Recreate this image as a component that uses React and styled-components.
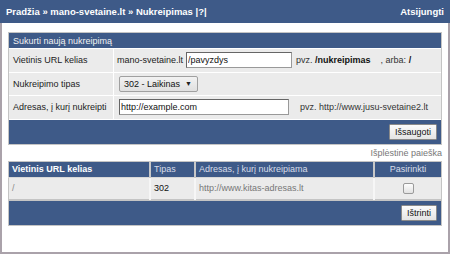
import React from "react"
import styled, { createGlobalStyle } from "styled-components"

const GlobalStyle = createGlobalStyle`
  html, body {
    margin: 0;
    padding: 0;
    background: #ffffff;
  }
  body {
    font-family: "Liberation Sans", Arial, sans-serif;
    font-size: 9px;
    color: #222;
  }
`

const blue = "#3e5a88"

const Page = styled.div`
  width: 450px;
  height: 254px;
  display: flex;
  flex-direction: column;
  box-sizing: border-box;
`

const TopBar = styled.div`
  height: 23px;
  flex: none;
  background: ${blue};
  color: #fff;
  font-weight: bold;
  font-size: 9.5px;
  display: flex;
  align-items: center;
  justify-content: space-between;
  padding: 0 6px;
`

const Main = styled.div`
  flex: 1;
  border: 2px solid #aaa2aa;
  border-top: none;
  padding: 9px 6px 0 6px;
  display: flex;
  flex-direction: column;
`

const Section = styled.div`
  border: 1px solid #c4c4c4;
  display: flex;
  flex-direction: column;
`

const SectionTitle = styled.div`
  height: 15px;
  background: ${blue};
  color: #f2f2f2;
  display: flex;
  align-items: center;
  padding: 0 4px;
`

const FormRow = styled.div`
  display: grid;
  grid-template-columns: 104px 1fr;
  column-gap: 1px;
  margin-top: 1px;
  height: 22.5px;
`

const LabelCell = styled.div`
  background: #ebebeb;
  display: flex;
  align-items: center;
  padding: 0 4px;
`

const ValueCell = styled.div`
  background: #ebebeb;
  display: flex;
  align-items: center;
  padding: 0 ${(p) => p.$pad || 3}px;
  gap: 3px;
`

const TextInput = styled.input`
  box-sizing: border-box;
  height: 16px;
  width: ${(p) => p.$w}px;
  border: 1px solid #999;
  border-top-color: #666;
  border-left-color: #666;
  background: #fff;
  font-family: "Liberation Sans", Arial, sans-serif;
  font-size: 9px;
  padding: 0 1px;
  margin-right: ${(p) => p.$mr || 0}px;
  color: #111;
  outline: none;
`

const SelectBox = styled.div`
  box-sizing: border-box;
  width: 79px;
  height: 16px;
  border: 1px solid #a0a0a0;
  border-radius: 2px;
  background: linear-gradient(#f2f2f2, #e0e0e0);
  display: flex;
  align-items: center;
  justify-content: space-between;
  padding: 0 5px 0 4px;
  color: #111;
`

const Arrow = styled.span`
  font-size: 7px;
  color: #222;
`

const Hint = styled.span`
  color: #333;
  white-space: pre;
`

const Bold = styled.b`
  color: #111;
`

const ActionBar = styled.div`
  height: 24px;
  margin-top: 1px;
  background: ${blue};
  display: flex;
  align-items: center;
  justify-content: flex-end;
  padding: 0 4px;
  ${(p) => p.$framed && `border: 1px solid #c4c4c4; margin-top: 0;`}
`

const Button = styled.button`
  box-sizing: border-box;
  height: 16px;
  padding: 0 5px;
  border: 1px solid #8a8a8a;
  border-radius: 1px;
  background: linear-gradient(#fbfbfb, #e4e4e4);
  font-family: "Liberation Sans", Arial, sans-serif;
  font-size: 9px;
  color: #111;
`

const SearchLink = styled.div`
  text-align: right;
  color: #777;
  margin: 3px 0 3px 0;
  line-height: 10px;
`

const Table = styled.table`
  width: 100%;
  border-collapse: collapse;
  border: 1px solid #c4c4c4;
`

const HeadCell = styled.th`
  background: ${blue};
  color: ${(p) => (p.$active ? "#ffffff" : "#d8dde8")};
  font-weight: ${(p) => (p.$active ? "bold" : "normal")};
  text-align: ${(p) => p.$align || "left"};
  width: ${(p) => (p.$w ? `${p.$w}px` : "auto")};
  height: 15px;
  padding: 0 3px;
  border-left: 2px solid #c8c8c8;
  font-size: 9px;
  &:first-child {
    border-left: none;
  }
`

const Cell = styled.td`
  background: #ebebeb;
  color: ${(p) => p.$color || "#888"};
  text-align: ${(p) => p.$align || "left"};
  height: 21px;
  padding: 0 3px;
  border-left: 2px solid #f6f6f6;
  border-top: 1px solid #d8d8d8;
  &:first-child {
    border-left: none;
  }
`

const Check = styled.span`
  display: inline-block;
  width: 9px;
  height: 9px;
  border: 1px solid #9a9a9a;
  border-radius: 2px;
  background: linear-gradient(#fdfdfd, #e2e2e2);
  vertical-align: middle;
`

export default function App() {
  return (
    <>
      <GlobalStyle />
      <Page>
        <TopBar>
          <span>Pradžia » mano-svetaine.lt » Nukreipimas |?|</span>
          <span>Atsijungti</span>
        </TopBar>
        <Main>
          <Section>
            <SectionTitle>Sukurti naują nukreipimą</SectionTitle>
            <FormRow>
              <LabelCell>Vietinis URL kelias</LabelCell>
              <ValueCell>
                <span>mano-svetaine.lt</span>
                <TextInput $w={106} $mr={1} defaultValue="/pavyzdys" />
                <Hint>
                  pvz. <Bold>/nukreipimas</Bold>{"    "}, arba: <Bold>/</Bold>
                </Hint>
              </ValueCell>
            </FormRow>
            <FormRow>
              <LabelCell>Nukreipimo tipas</LabelCell>
              <ValueCell $pad={5}>
                <SelectBox>
                  <span>302 - Laikinas</span>
                  <Arrow>▼</Arrow>
                </SelectBox>
              </ValueCell>
            </FormRow>
            <FormRow>
              <LabelCell>Adresas, į kurį nukreipti</LabelCell>
              <ValueCell $pad={5}>
                <TextInput $w={170} $mr={8} defaultValue="http://example.com" />
                <Hint>pvz. http://www.jusu-svetaine2.lt</Hint>
              </ValueCell>
            </FormRow>
            <ActionBar>
              <Button>Išsaugoti</Button>
            </ActionBar>
          </Section>

          <SearchLink>Išplėstinė paieška</SearchLink>

          <Table>
            <thead>
              <tr>
                <HeadCell $active $w={134}>Vietinis URL kelias</HeadCell>
                <HeadCell $w={37}>Tipas</HeadCell>
                <HeadCell>Adresas, į kurį nukreipiama</HeadCell>
                <HeadCell $align="center" $w={60}>Pasirinkti</HeadCell>
              </tr>
            </thead>
            <tbody>
              <tr>
                <Cell>/</Cell>
                <Cell $color="#111">302</Cell>
                <Cell $color="#777">http://www.kitas-adresas.lt</Cell>
                <Cell $align="center">
                  <Check />
                </Cell>
              </tr>
            </tbody>
          </Table>
          <ActionBar $framed>
            <Button>Ištrinti</Button>
          </ActionBar>
        </Main>
      </Page>
    </>
  )
}
